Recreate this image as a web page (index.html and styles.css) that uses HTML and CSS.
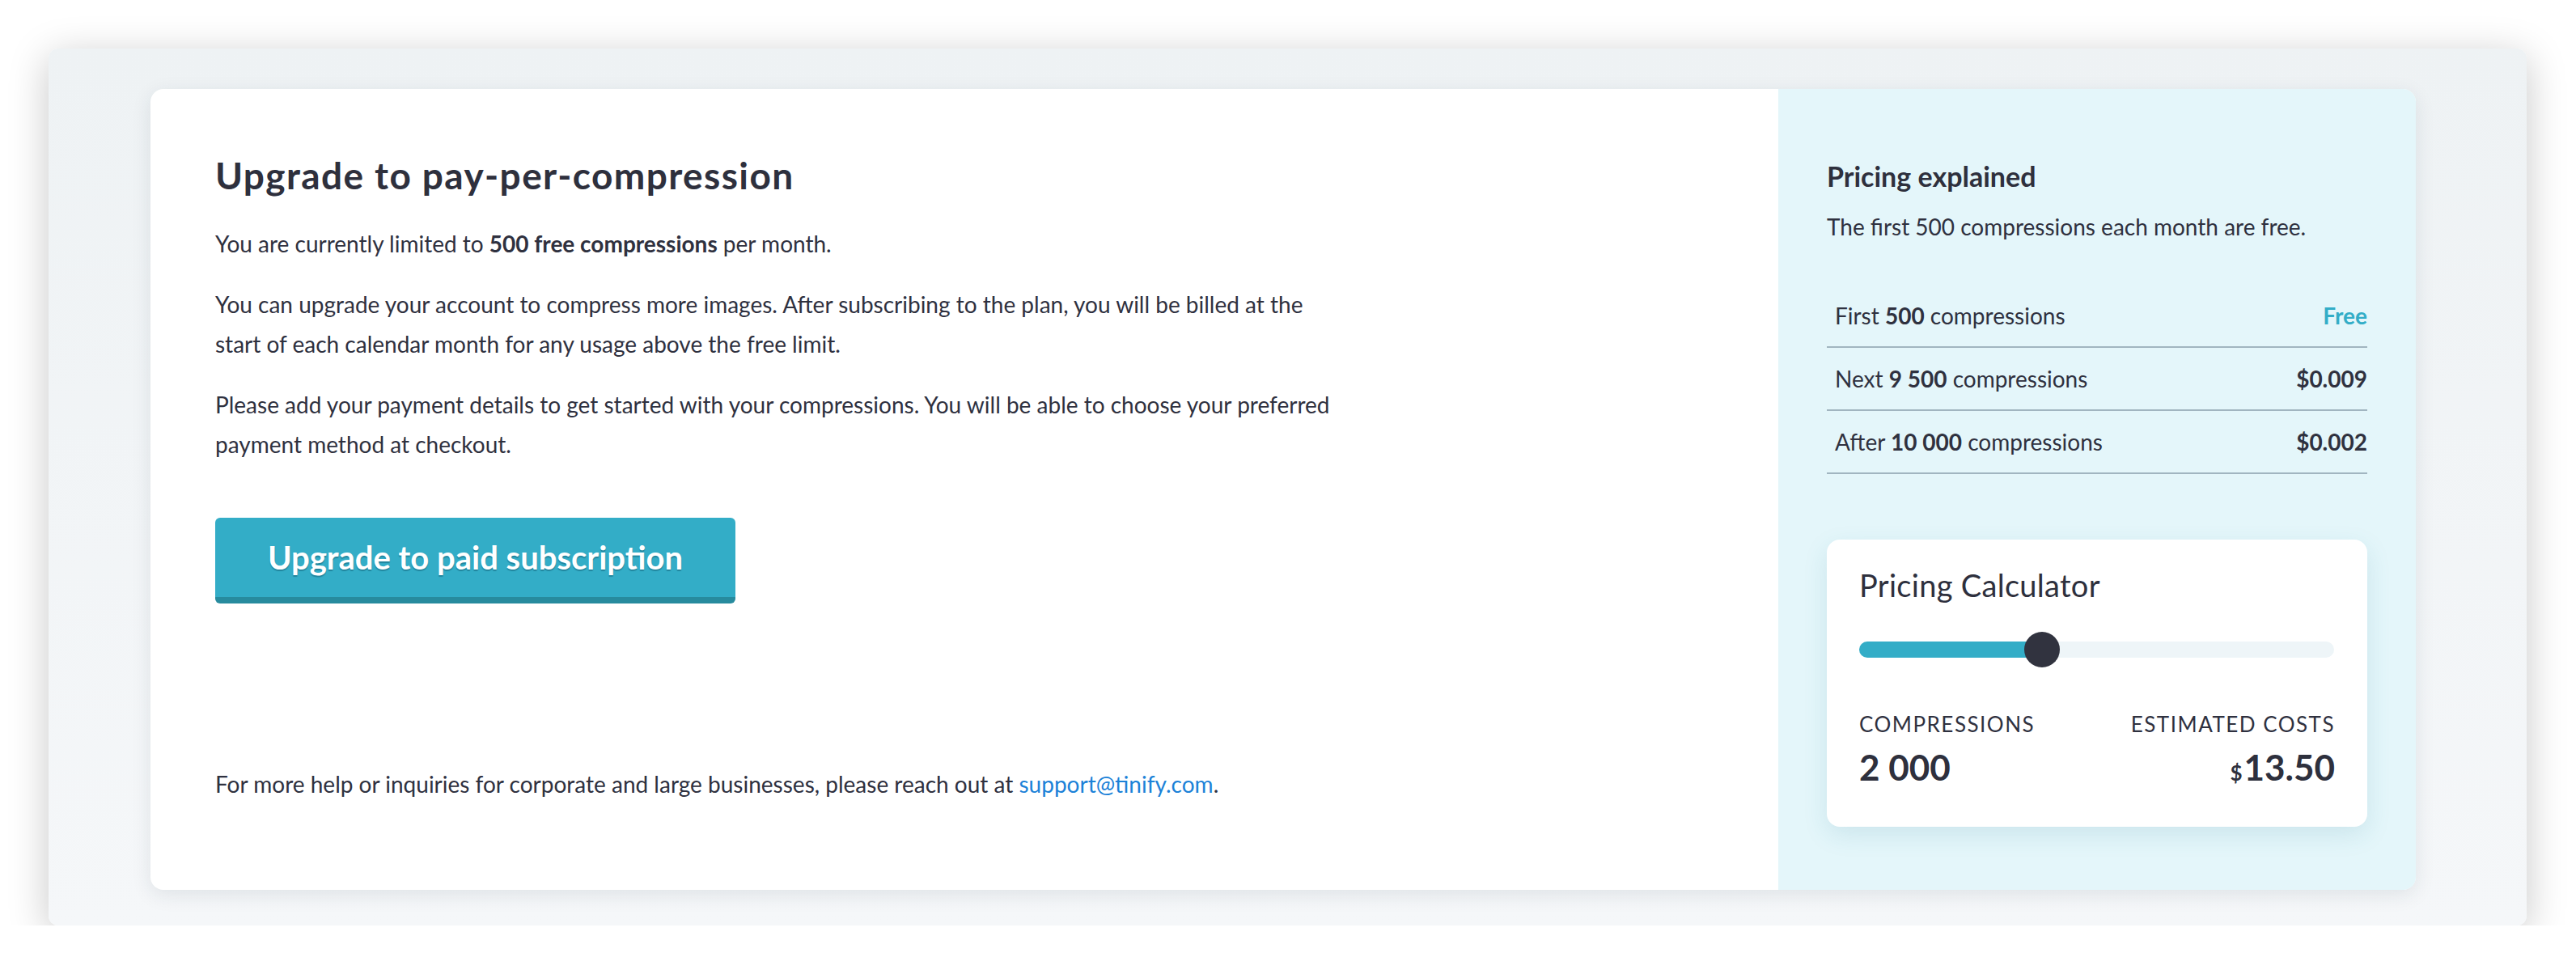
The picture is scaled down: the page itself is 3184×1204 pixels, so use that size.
FILE: index.html
```html
<!DOCTYPE html>
<html lang="en">
<head>
<meta charset="utf-8">
<title>Upgrade to pay-per-compression</title>
<link rel="stylesheet" href="styles.css">
</head>
<body>
<div class="frame">
  <section class="card">
    <div class="main">
      <h1 class="title">Upgrade to pay-per-compression</h1>
      <p class="text">You are currently limited to <strong>500 free compressions</strong> per month.</p>
      <p class="text">You can upgrade your account to compress more images. After subscribing to the plan, you will be billed at the<br>start of each calendar month for any usage above the free limit.</p>
      <p class="text">Please add your payment details to get started with your compressions. You will be able to choose your preferred<br>payment method at checkout.</p>
      <div class="actions"><button class="btn">Upgrade to paid subscription</button></div>
      <p class="text footer">For more help or inquiries for corporate and large businesses, please reach out at <a class="link" href="#">support@tinify.com</a>.</p>
    </div>
    <aside class="side">
      <h3 class="side-title">Pricing explained</h3>
      <p class="text side-desc">The first 500 compressions each month are free.</p>
      <div class="tiers">
        <div class="tier"><span>First <strong>500</strong> compressions</span><span class="price free">Free</span></div>
        <div class="tier"><span>Next <strong>9 500</strong> compressions</span><span class="price">$0.009</span></div>
        <div class="tier"><span>After <strong>10 000</strong> compressions</span><span class="price">$0.002</span></div>
      </div>
      <div class="calc">
        <h4 class="calc-title">Pricing Calculator</h4>
        <div class="slider">
          <div class="track"><div class="fill" style="width: 38.5%"></div></div>
          <div class="thumb" style="left: 38.5%"></div>
        </div>
        <div class="stats">
          <div class="stat">
            <div class="stat-label">Compressions</div>
            <div class="stat-value">2 000</div>
          </div>
          <div class="stat right">
            <div class="stat-label">Estimated costs</div>
            <div class="stat-value"><span class="cur">$</span>13.50</div>
          </div>
        </div>
      </div>
    </aside>
  </section>
</div>
</body>
</html>
```
FILE: styles.css
```css
* { box-sizing: border-box; }
html, body { margin: 0; padding: 0; background: #ffffff; }
body {
  font-family: Lato, "Noto Sans", "Liberation Sans", sans-serif;
  color: #2f313f;
}
.frame {
  margin: 60px 0 0 60px;
  width: 3063px;
  height: 1084px;
  padding: 50px 137px 44px 126px;
  border-radius: 12px;
  background: linear-gradient(180deg, #eef2f4 0%, #f5f7f9 100%);
  box-shadow: 0 10px 50px rgba(0, 0, 0, 0.22);
}
.card {
  display: grid;
  grid-template-columns: 1fr 788px;
  height: 990px;
  border-radius: 16px;
  overflow: hidden;
  background: #ffffff;
  box-shadow: 0 6px 24px rgba(30, 50, 70, 0.10);
}
.main {
  display: flex;
  flex-direction: column;
  padding: 79px 80px 80px 80px;
}
.title {
  margin: 0 0 33px;
  font-size: 46px;
  letter-spacing: 1.4px;
  line-height: 1.2;
  font-weight: 700;
  color: #2e303d;
}
.text {
  margin: 0 0 26px;
  font-size: 28px;
  line-height: 49px;
}
.text strong { font-weight: 700; }
.actions { margin-top: 40px; }
.btn {
  font-family: inherit;
  font-size: 40px;
  font-weight: 700;
  color: #ffffff;
  background: #33adc7;
  border: 0;
  border-bottom: 8px solid #278b9e;
  border-radius: 6px;
  height: 106px;
  width: 643px;
  padding: 0;
  text-shadow: 0 2px 1px rgba(0, 60, 80, 0.35);
  cursor: pointer;
}
.footer { margin-top: auto; margin-bottom: 29px; }
.link { color: #1c82d8; text-decoration: none; }

.side {
  background: #e4f6fa;
  padding: 80px 60px 81px;
  display: flex;
  flex-direction: column;
}
.side-title {
  margin: 0 0 10px;
  font-size: 34px;
  line-height: 56px;
  font-weight: 700;
  color: #2e303d;
}
.side-desc { margin: 0 0 47px; }
.tiers { margin-bottom: 81px; }
.tier {
  display: flex;
  justify-content: space-between;
  align-items: center;
  height: 78px;
  padding: 0 0 0 10px;
  border-bottom: 2px solid #a1b5c0;
  font-size: 28px;
}
.price { font-weight: 700; }
.price.free { color: #33adc7; }

.calc {
  background: #ffffff;
  border-radius: 16px;
  padding: 34px 40px 40px;
  box-shadow: 0 10px 30px rgba(40, 120, 150, 0.13);
}
.calc-title {
  margin: 0 0 36px;
  font-size: 38px;
  letter-spacing: 0.3px;
  line-height: 44px;
  font-weight: 400;
  color: #2e303d;
}
.slider {
  position: relative;
  height: 44px;
  margin-right: 1px;
  margin-bottom: 55px;
}
.track {
  position: absolute;
  left: 0; right: 0; top: 12px;
  height: 20px;
  border-radius: 10px;
  background: #eef5f8;
  overflow: hidden;
}
.fill { height: 100%; background: #33adc7; }
.thumb {
  position: absolute;
  top: 0;
  width: 44px;
  height: 44px;
  margin-left: -22px;
  border-radius: 50%;
  background: #31333f;
}
.stats { display: flex; justify-content: space-between; }
.stat.right { text-align: right; }
.stat-label {
  font-size: 26px;
  line-height: 30px;
  letter-spacing: 1.5px;
  text-transform: uppercase;
  margin-bottom: 12px;
}
.stat-value {
  font-size: 44px;
  line-height: 52.8px;
  font-weight: 700;
  color: #2e303d;
}
.cur { font-size: 26px; margin-right: 2px; }
```
